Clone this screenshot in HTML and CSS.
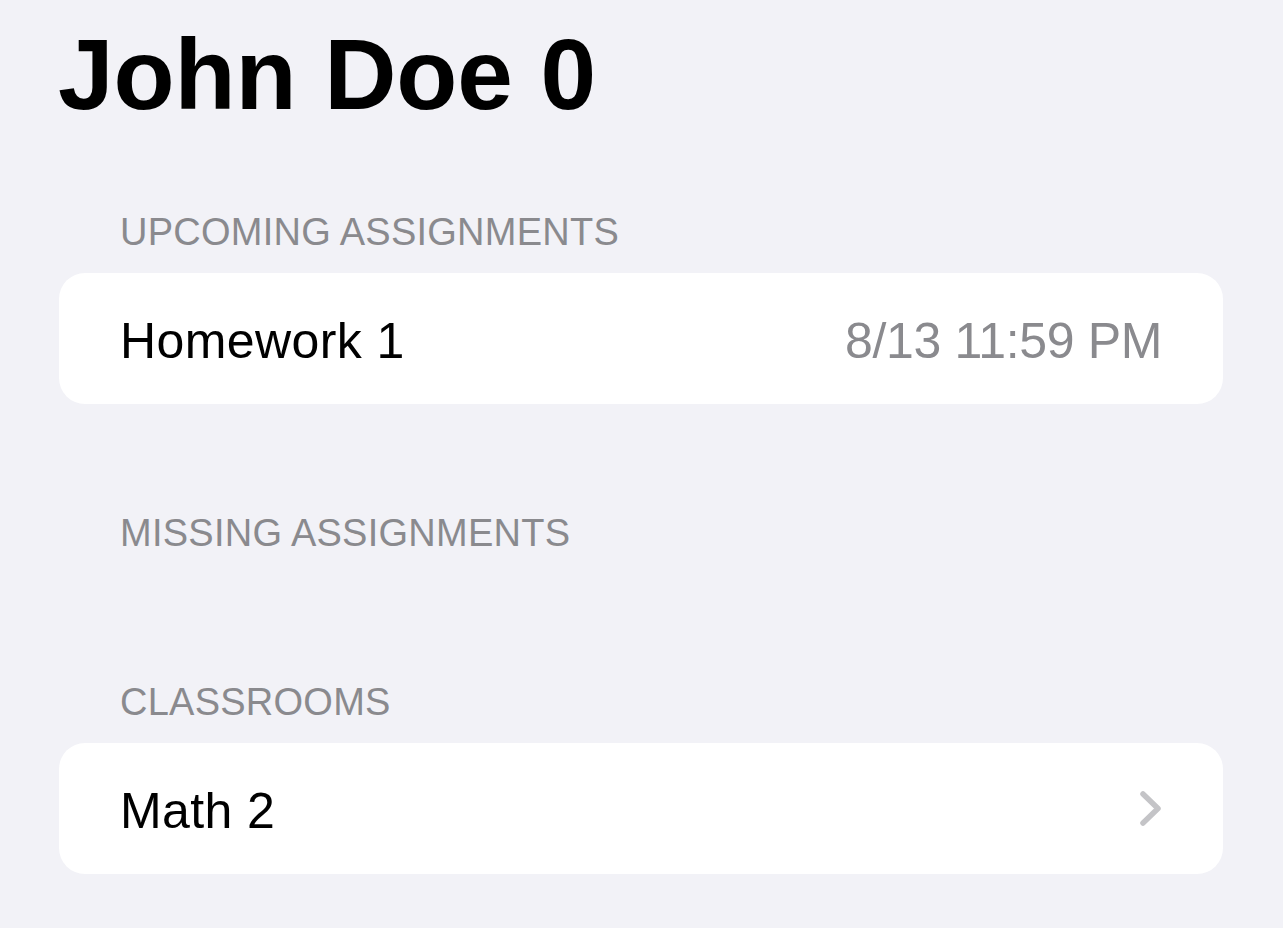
FILE: index.html
```html
<!DOCTYPE html>
<html lang="en">
<head>
<meta charset="utf-8">
<title>John Doe 0</title>
<link rel="stylesheet" href="styles.css">
</head>
<body>
<main class="page">
  <h1 class="title">John Doe 0</h1>
  <div class="sections">
    <section class="group">
      <h2 class="group-header">UPCOMING ASSIGNMENTS</h2>
      <div class="card">
        <div class="row">
          <span class="row-label">Homework 1</span>
          <span class="row-detail">8/13 11:59 PM</span>
        </div>
      </div>
    </section>
    <section class="group">
      <h2 class="group-header">MISSING ASSIGNMENTS</h2>
      <div class="empty"></div>
    </section>
    <section class="group">
      <h2 class="group-header">CLASSROOMS</h2>
      <div class="card">
        <div class="row">
          <span class="row-label">Math 2</span>
          <svg class="chevron" width="21" height="35" viewBox="0 0 21 35" aria-hidden="true">
            <polyline points="3,3 18,17.5 3,32" fill="none" stroke="#c4c4c7" stroke-width="5.5" stroke-linecap="round" stroke-linejoin="round"/>
          </svg>
        </div>
      </div>
    </section>
  </div>
</main>
</body>
</html>
```

FILE: styles.css
```css
* { box-sizing: border-box; }
html, body {
  margin: 0;
  padding: 0;
  background: #f2f2f7;
}
body {
  font-family: "Liberation Sans", Arial, sans-serif;
  color: #000;
}
.page {
  padding: 14px 60px 0 58px;
}
.title {
  margin: 0 0 75px 0;
  font-size: 100px;
  line-height: 120px;
  font-weight: 700;
  letter-spacing: -0.1px;
}
.sections {
  display: flex;
  flex-direction: column;
  gap: 106px;
}
.group-header {
  margin: 0 0 18px 62px;
  font-size: 38px;
  line-height: 46px;
  font-weight: 400;
  color: #8a8a8e;
  letter-spacing: 0.25px;
}
.empty {
  height: 0;
  margin-top: -1px;
}
.card {
  background: #fff;
  border-radius: 26px;
  margin-left: 1px;
}
.row {
  display: flex;
  align-items: center;
  justify-content: space-between;
  height: 131px;
  padding: 0 61px 0 61px;
}
.row-label {
  font-size: 50px;
  line-height: 60px;
  padding-top: 4px;
  letter-spacing: 0.4px;
}
.row-detail {
  font-size: 50px;
  line-height: 60px;
  padding-top: 4px;
  color: #8a8a8e;
  letter-spacing: -0.35px;
}
.chevron {
  display: block;
  flex: none;
  margin-right: 1px;
}
```
